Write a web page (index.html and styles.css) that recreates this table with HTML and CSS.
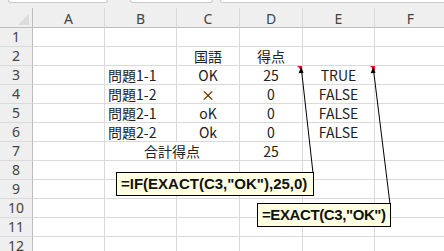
FILE: index.html
```html
<!DOCTYPE html>
<html lang="ja">
<head>
    <meta charset="UTF-8">
    <title>EXACT関数</title>
    <link rel="stylesheet" href="styles.css">
</head>
<body>

<div class="sheet">
    <div class="topbar">
        <span class="tab tab-name"></span>
        <span class="tab tab-fx"></span>
        <span class="tab tab-formula"></span>
    </div>

    <div class="grid">
        <div class="corner"><span class="corner-mark"></span></div>
        <div class="colhead">A</div>
        <div class="colhead">B</div>
        <div class="colhead">C</div>
        <div class="colhead">D</div>
        <div class="colhead">E</div>
        <div class="colhead">F</div>

        <div class="rowhead">1</div>
        <div class="cell"></div><div class="cell"></div><div class="cell"></div><div class="cell"></div><div class="cell"></div><div class="cell"></div>

        <div class="rowhead">2</div>
        <div class="cell"></div><div class="cell"></div>
        <div class="cell center">国語</div>
        <div class="cell center">得点</div>
        <div class="cell"></div><div class="cell"></div>

        <div class="rowhead">3</div>
        <div class="cell"></div>
        <div class="cell">問題1-1</div>
        <div class="cell center">OK</div>
        <div class="cell center">25</div>
        <div class="cell center">TRUE</div>
        <div class="cell"></div>

        <div class="rowhead">4</div>
        <div class="cell"></div>
        <div class="cell">問題1-2</div>
        <div class="cell center">×</div>
        <div class="cell center">0</div>
        <div class="cell center">FALSE</div>
        <div class="cell"></div>

        <div class="rowhead">5</div>
        <div class="cell"></div>
        <div class="cell">問題2-1</div>
        <div class="cell center">oK</div>
        <div class="cell center">0</div>
        <div class="cell center">FALSE</div>
        <div class="cell"></div>

        <div class="rowhead">6</div>
        <div class="cell"></div>
        <div class="cell">問題2-2</div>
        <div class="cell center">Ok</div>
        <div class="cell center">0</div>
        <div class="cell center">FALSE</div>
        <div class="cell"></div>

        <div class="rowhead">7</div>
        <div class="cell"></div>
        <div class="cell center merged">合計得点</div>
        <div class="cell center">25</div>
        <div class="cell"></div><div class="cell"></div>

        <div class="rowhead">8</div>
        <div class="cell"></div><div class="cell"></div><div class="cell"></div><div class="cell"></div><div class="cell"></div><div class="cell"></div>
        <div class="rowhead">9</div>
        <div class="cell"></div><div class="cell"></div><div class="cell"></div><div class="cell"></div><div class="cell"></div><div class="cell"></div>
        <div class="rowhead">10</div>
        <div class="cell"></div><div class="cell"></div><div class="cell"></div><div class="cell"></div><div class="cell"></div><div class="cell"></div>
        <div class="rowhead">11</div>
        <div class="cell"></div><div class="cell"></div><div class="cell"></div><div class="cell"></div><div class="cell"></div><div class="cell"></div>
        <div class="rowhead">12</div>
        <div class="cell"></div><div class="cell"></div><div class="cell"></div><div class="cell"></div><div class="cell"></div><div class="cell"></div>
    </div>

    <!-- comment markers and leader arrows -->
    <svg class="leaders" width="444" height="251" viewBox="0 0 444 251">
        <polygon points="297,66 302,66 302,71" fill="#e81123"/>
        <polygon points="370,66 375,66 375,71" fill="#e81123"/>
        <line x1="313" y1="173" x2="301.5" y2="70" stroke="#000" stroke-width="1"/>
        <polygon points="301,67 298.6,73.3 303.6,72.8" fill="#000"/>
        <line x1="390" y1="204" x2="373.5" y2="70" stroke="#000" stroke-width="1"/>
        <polygon points="373,67 370.7,73.3 375.6,72.7" fill="#000"/>
    </svg>

    <div class="note note-if">=IF(EXACT(C3,"OK"),25,0)</div>
    <div class="note note-exact">=EXACT(C3,"OK")</div>
</div>

</body>
</html>
```

FILE: styles.css
```css
body {
    margin: 0;
    background-color: #fff;
    font-family: "Noto Sans CJK JP", "Noto Sans", sans-serif;
    color: #222;
    overflow: hidden;
}

.sheet {
    position: relative;
    width: 444px;
    height: 251px;
    overflow: hidden;
    background-color: #fff;
}

.topbar {
    display: flex;
    height: 8px;
    background-color: #efefef;
}

.tab {
    display: block;
    height: 2px;
    background-color: #fff;
    border: 1px solid #c8c8c8;
    border-top: none;
    border-radius: 0 0 4px 4px;
}

.tab-name {
    margin-left: 8px;
    width: 98px;
}

.tab-fx {
    margin-left: 22px;
    width: 81px;
}

.tab-formula {
    margin-left: 7px;
    flex: 1;
    margin-right: -10px;
}

.grid {
    display: grid;
    grid-template-columns: 33px 72px 72px 63px 63px 72px 72px;
    grid-template-rows: 20px;
    grid-auto-rows: 19px;
    width: 447px;
}

.corner,
.colhead,
.rowhead {
    background-color: #efefef;
    color: #444;
    font-family: "Noto Sans", sans-serif;
    font-size: 14px;
    box-sizing: border-box;
}

.corner {
    position: relative;
    border-right: 1px solid #bdbdbd;
    border-bottom: 1px solid #bdbdbd;
}

.corner-mark {
    position: absolute;
    right: 3px;
    bottom: 2px;
    width: 0;
    height: 0;
    border-left: 11px solid transparent;
    border-bottom: 11px solid #dcdcdc;
}

.colhead {
    display: flex;
    align-items: center;
    justify-content: center;
    border-right: 1px solid #dadada;
    border-bottom: 1px solid #bdbdbd;
    line-height: 19px;
    padding-top: 1px;
}

.rowhead {
    display: flex;
    align-items: center;
    justify-content: center;
    border-right: 1px solid #bdbdbd;
    border-bottom: 1px solid #dadada;
    line-height: 18px;
}

.cell {
    box-sizing: border-box;
    border-right: 1px solid #dadada;
    border-bottom: 1px solid #dadada;
    font-size: 14px;
    line-height: 18px;
    padding-left: 3px;
    white-space: nowrap;
    overflow: visible;
}

.center {
    text-align: center;
    padding-left: 0;
}

.merged {
    grid-column: span 2;
}

.leaders {
    position: absolute;
    left: 0;
    top: 0;
}

.note {
    position: absolute;
    box-sizing: border-box;
    height: 24px;
    padding-left: 4px;
    background-color: #ffffe1;
    border: 1px solid #000;
    font-family: "Liberation Sans", Arial, sans-serif;
    font-weight: bold;
    font-size: 15px;
    line-height: 22px;
    color: #111;
    white-space: nowrap;
}

.note-if {
    left: 116px;
    top: 172px;
    width: 198px;
}

.note-exact {
    left: 257px;
    top: 203px;
    width: 134px;
    letter-spacing: -0.4px;
}
```
